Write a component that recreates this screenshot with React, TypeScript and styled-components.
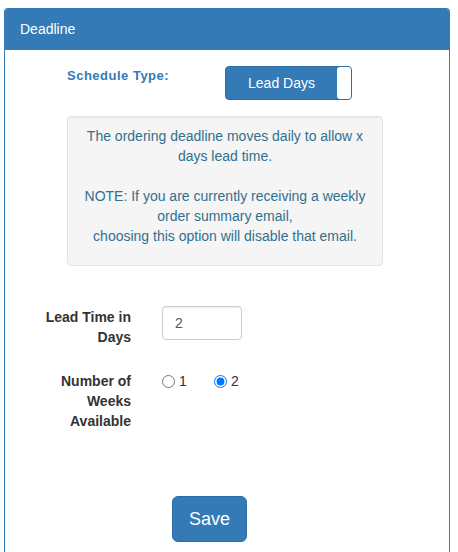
import React from "react";
import styled, { createGlobalStyle } from "styled-components";

const Global = createGlobalStyle`
  html, body { margin: 0; padding: 0; background: #fff; }
  body {
    font-family: "Liberation Sans", Arial, Helvetica, sans-serif;
    font-size: 14px;
    line-height: 20px;
    color: #333;
  }
  * { box-sizing: border-box; }
`;

const Page = styled.div`
  padding: 8px 8px 0 4px;
`;

const Panel = styled.div`
  width: 446px;
  min-height: 544px;
  border: 1px solid #337ab7;
  border-bottom: none;
  border-radius: 4px 4px 0 0;
  background: #fff;
`;

const PanelHeading = styled.div`
  background: #337ab7;
  color: #fff;
  padding: 10px 15px;
  border-bottom: 1px solid #337ab7;
  border-radius: 3px 3px 0 0;
  font-size: 14px;
  line-height: 20px;
`;

const PanelBody = styled.div`
  padding: 15px 15px 0;
  display: flex;
  flex-direction: column;
`;

const ScheduleRow = styled.div`
  display: flex;
  align-items: flex-start;
  padding-left: 47px;
`;

const ScheduleLabel = styled.label`
  width: 158px;
  padding-top: 1px;
  font-weight: bold;
  font-size: 13px;
  letter-spacing: 0.5px;
  color: #337ab7;
  line-height: 20px;
`;

const Toggle = styled.div`
  margin-top: 1px;
  width: 127px;
  height: 34px;
  display: flex;
  background: #337ab7;
  border: 1px solid #2e6da4;
  border-radius: 4px;
  overflow: hidden;
`;

const ToggleOn = styled.span`
  flex: 1;
  display: flex;
  align-items: center;
  justify-content: center;
  color: #fff;
  font-size: 14px;
`;

const ToggleHandle = styled.span`
  width: 14px;
  background: #fff;
  border-radius: 3px 0 0 3px;
`;

const Well = styled.div`
  margin: 16px 0 0 47px;
  width: 316px;
  padding: 9px;
  background: #f5f5f5;
  border: 1px solid #e3e3e3;
  border-radius: 4px;
  box-shadow: inset 0 1px 1px rgba(0, 0, 0, 0.05);
  text-align: center;
  color: #31708f;
`;

const WellText = styled.p`
  margin: 0 0 10px;
`;

const FormRow = styled.div<{ $top: number }>`
  display: flex;
  align-items: flex-start;
  margin-top: ${(p) => p.$top}px;
`;

const FieldLabel = styled.label`
  margin-left: 9px;
  width: 102px;
  text-align: right;
  font-weight: bold;
  line-height: 20px;
  padding-top: 1px;
  margin-right: 31px;
`;

const TextInput = styled.input`
  width: 80px;
  height: 34px;
  padding: 6px 12px;
  font-family: inherit;
  font-size: 14px;
  color: #555;
  border: 1px solid #ccc;
  border-radius: 4px;
  box-shadow: inset 0 1px 1px rgba(0, 0, 0, 0.075);
  outline: none;
`;

const RadioGroup = styled.div`
  display: flex;
  padding-top: 1px;
`;

const RadioOption = styled.label`
  width: 52px;
  display: inline-flex;
  align-items: center;
  gap: 4px;
  line-height: 20px;
`;

const Radio = styled.input`
  margin: 0;
  width: 13px;
  height: 13px;
`;

const SaveButton = styled.button`
  margin: 65px 0 0 152px;
  align-self: flex-start;
  padding: 10px 16px;
  font-family: inherit;
  font-size: 18px;
  line-height: 24px;
  color: #fff;
  background: #337ab7;
  border: 1px solid #2e6da4;
  border-radius: 6px;
  cursor: pointer;
`;

export default function App() {
  return (
    <>
      <Global />
      <Page>
        <Panel>
          <PanelHeading>Deadline</PanelHeading>
          <PanelBody>
            <ScheduleRow>
              <ScheduleLabel>Schedule Type:</ScheduleLabel>
              <Toggle>
                <ToggleOn>Lead Days</ToggleOn>
                <ToggleHandle />
              </Toggle>
            </ScheduleRow>
            <Well>
              <WellText>
                The ordering deadline moves daily to allow x days lead time.
                <br />
                <br />
                NOTE: If you are currently receiving a weekly order summary email,
                <br />
                choosing this option will disable that email.
              </WellText>
            </Well>
            <FormRow $top={40}>
              <FieldLabel>Lead Time in Days</FieldLabel>
              <TextInput type="text" defaultValue="2" />
            </FormRow>
            <FormRow $top={23}>
              <FieldLabel>Number of Weeks Available</FieldLabel>
              <RadioGroup>
                <RadioOption>
                  <Radio type="radio" name="weeks" value="1" />1
                </RadioOption>
                <RadioOption>
                  <Radio type="radio" name="weeks" value="2" defaultChecked />2
                </RadioOption>
              </RadioGroup>
            </FormRow>
            <SaveButton>Save</SaveButton>
          </PanelBody>
        </Panel>
      </Page>
    </>
  );
}
